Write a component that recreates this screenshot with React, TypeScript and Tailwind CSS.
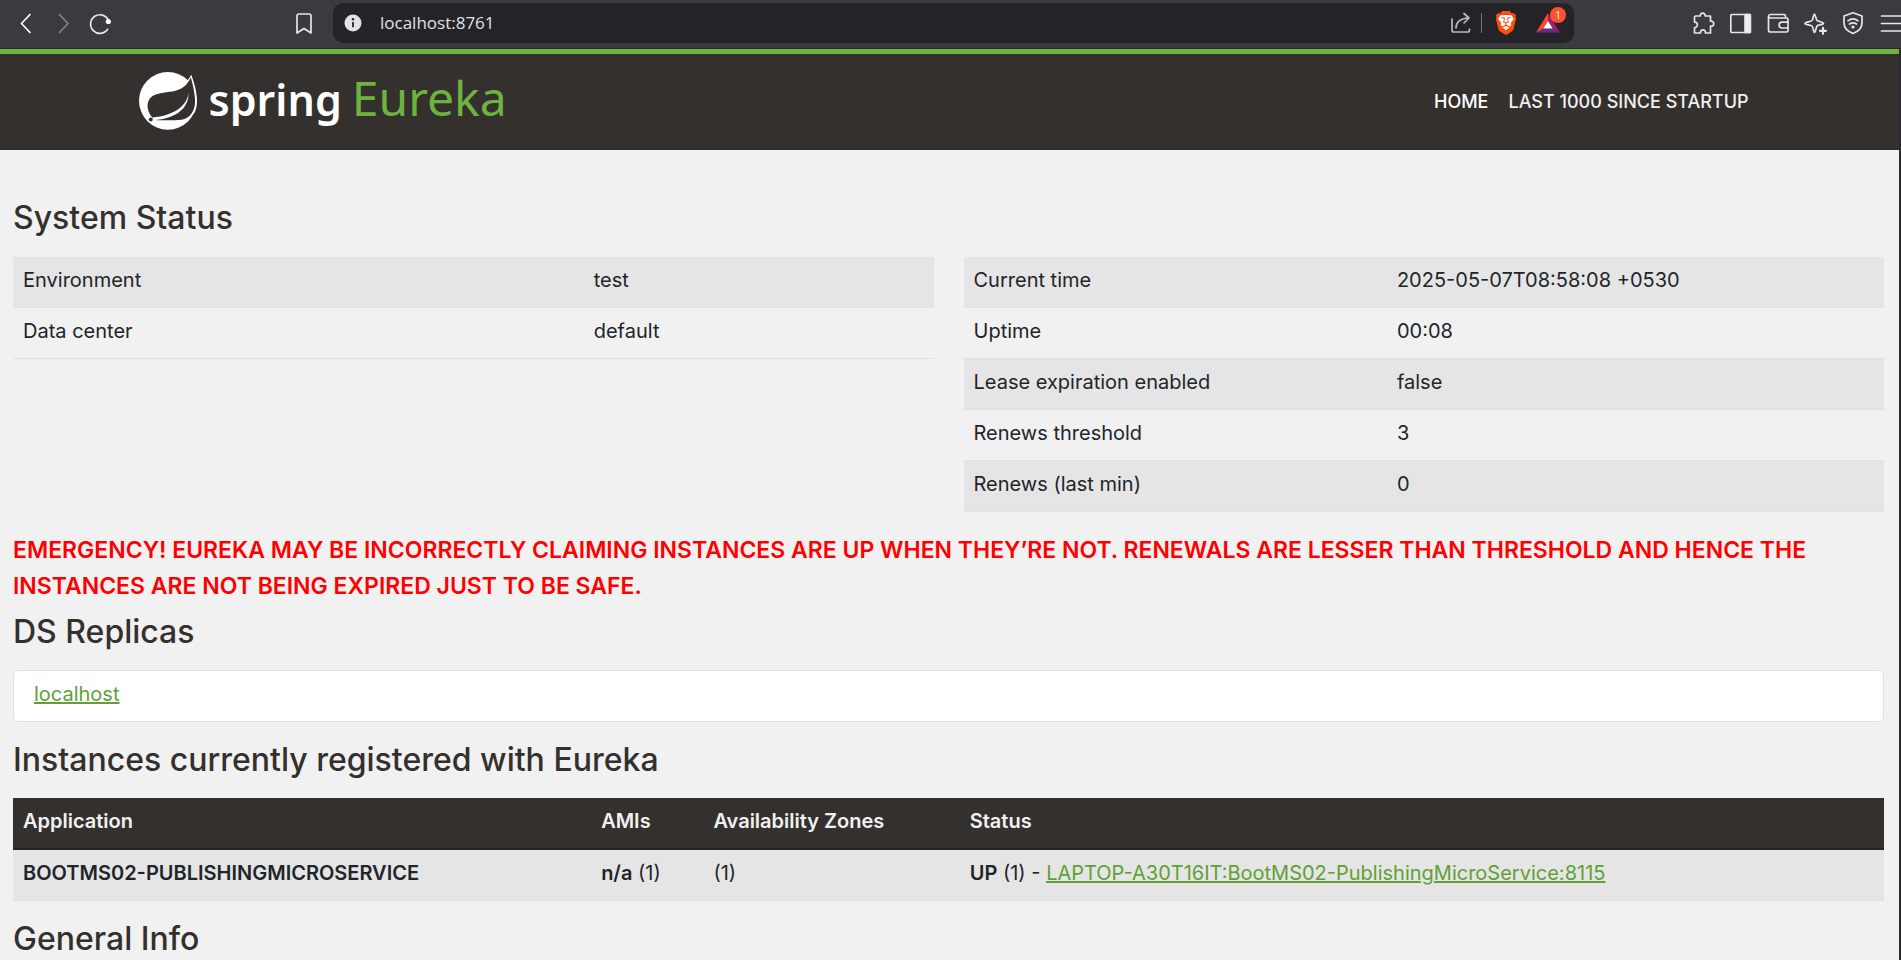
import React from 'react';
import { SiBrave } from 'react-icons/si';

const chromeLine = {
  fill: 'none',
  stroke: '#e6e6ea',
  strokeWidth: 1.7,
  strokeLinecap: 'round',
  strokeLinejoin: 'round',
} as const;

function ChromeButton({ label, children }: { label: string; children: React.ReactNode }) {
  return (
    <button type="button" aria-label={label} className="flex size-6 shrink-0 items-center justify-center">
      {children}
    </button>
  );
}

function Glyph({ children }: { children: React.ReactNode }) {
  return (
    <svg viewBox="0 0 24 24" className="size-6 overflow-visible" aria-hidden="true" {...chromeLine}>
      {children}
    </svg>
  );
}

function BrowserBar() {
  return (
    <div className="flex h-12 shrink-0 items-center overflow-hidden bg-[#3b3a3e] pb-[2px] pl-[13px]">
      <div className="flex items-center gap-[13px]">
        <ChromeButton label="Back">
          <Glyph><path d="M17 3.5 8.5 12.5 17 21.5" stroke="#fff" /></Glyph>
        </ChromeButton>
        <ChromeButton label="Forward">
          <Glyph><path d="M9.500 3.5 18 12.500 9.500 21.500" stroke="#838287" /></Glyph>
        </ChromeButton>
        <ChromeButton label="Reload">
          <Glyph>
            <path d="M21.500 9.500A9.300 9.300 0 1 0 20.600 18.300" />
            <circle cx="21.300" cy="10.500" r="2.600" fill="#fff" stroke="none" />
          </Glyph>
        </ChromeButton>
      </div>
      <div className="ml-[181px] mr-[17px] flex">
        <ChromeButton label="Bookmark this page">
          <Glyph><path d="M7 3h10a2 2 0 0 1 2 2v17l-7-4.500-7 4.500V5a2 2 0 0 1 2-2z" /></Glyph>
        </ChromeButton>
      </div>
      <div className="flex h-10 min-w-0 flex-1 items-center rounded-[10px] bg-[#242328] pr-3 pl-[11px]">
        <svg viewBox="0 0 18 18" className="size-[18px] shrink-0" role="img" aria-label="Site information">
          <circle cx="9" cy="9" r="8.500" fill="#e3e2e7" />
          <circle cx="9" cy="5.300" r="1.200" fill="#242328" />
          <path d="M9 8v5.300" stroke="#242328" strokeWidth="1.800" />
        </svg>
        <input
          type="text"
          aria-label="Address"
          defaultValue="localhost:8761"
          className="ml-[18px] h-8 min-w-0 flex-1 bg-transparent pb-[2px] font-['Open_Sans',sans-serif] text-[17px] text-[#e2e2e6] outline-none"
        />
        <ChromeButton label="Share">
          <Glyph>
            <g stroke="#b9b9be">
              <path d="M3 8v11a2 2 0 0 0 2 2h13.500a2 2 0 0 0 2-2v-1" />
              <path d="M7 17c0-6 4.500-9.500 12.500-10M15 2.500 20 7l-5 5" />
            </g>
          </Glyph>
        </ChromeButton>
        <span className="mx-2 h-5 w-px bg-[#77767b]" />
        <button type="button" aria-label="Shields" className="flex h-6 w-8 shrink-0 items-center justify-center">
          <svg viewBox="0 0 24 24" className="size-6 overflow-visible" aria-hidden="true">
            <path d="M5 4h14l1 5-3 9-5 4-5-4-3-9z" fill="#fff" />
            <SiBrave size={24} color="#fb4f0a" />
          </svg>
        </button>
        <button type="button" aria-label="Rewards, 1 new" className="relative ml-3 flex size-7 shrink-0 items-center justify-center">
          <svg viewBox="1 1 22 20" className="h-5 w-6" preserveAspectRatio="none" aria-hidden="true">
            <path d="M12 1 1 20.500 8 16.500 12 9z" fill="#ff4724" />
            <path d="M12 1 23 20.500 16 16.500 12 9z" fill="#9e1f63" />
            <path d="M1 20.500h22L16 16.500H8z" fill="#662d91" />
            <path d="M12 9 16.300 16.500H7.700z" fill="#fff" />
          </svg>
          <span className="absolute -top-[2px] -right-[4px] flex size-4 items-center justify-center rounded-full bg-[#ff5030] font-['Open_Sans',sans-serif] text-[10px] text-white">
            1
          </span>
        </button>
      </div>
      <div className="ml-[118px] flex items-center gap-[13px]">
        <ChromeButton label="Extensions">
          <Glyph>
            <path d="M3.500 5H8.300c-.6-3.800 5.400-3.800 4.800 0h5.400v5.200c4.300-.6 4.300 5.600 0 5V22H13.500c.4-4.200-5.400-4.200-5 0H2.500v-5.500c3.800.3 3.800-5.600 0-5.300V6z" />
          </Glyph>
        </ChromeButton>
        <ChromeButton label="Sidebar">
          <Glyph>
            <rect x="1.800" y="3.500" width="19.500" height="18" rx="1" />
            <path d="M16 3.500h5.300v18H16z" fill="#f0f0f3" />
          </Glyph>
        </ChromeButton>
        <ChromeButton label="Wallet">
          <Glyph>
            <path d="M19.500 7V5a1.500 1.500 0 0 0-1.500-1.500H4A1.800 1.800 0 0 0 4 7h16.500A1.500 1.500 0 0 1 22 8.500v11a1.500 1.500 0 0 1-1.500 1.500H4.500a2 2 0 0 1-2-2V5.500" />
            <path d="M22 11.200h-6a2.900 2.900 0 0 0 0 5.800h6" />
          </Glyph>
        </ChromeButton>
        <ChromeButton label="Leo AI">
          <Glyph>
            <path d="M11.500 3c1 0 1.300 5.200 2.500 6.400s6.500 1.800 6.500 3-5.500 1.300-6.500 2.700-1.500 6.400-2.500 6.400-1.200-5.200-2.500-6.500-7-1.200-7-2.600 5.700-1.600 7-2.900S10.500 3 11.500 3z" />
            <path d="M20 16.800v6M17 19.800h6" strokeWidth="2.200" />
          </Glyph>
        </ChromeButton>
        <ChromeButton label="VPN">
          <Glyph>
            <path d="M13 1.800 22 5v7c0 5-4 8.500-9 10.500C8 20.500 4 17 4 12V5z" />
            <path d="M8 9.800c3-2.300 7-2.300 10 0M9.500 13c2.200-1.500 4.800-1.500 7 0" strokeWidth="1.700" />
            <circle cx="13" cy="16" r="1.600" fill="#e6e6ea" stroke="none" />
          </Glyph>
        </ChromeButton>
        <ChromeButton label="Menu">
          <Glyph><path d="M4.500 5h24M4.500 12.500h24M4.500 20h24" /></Glyph>
        </ChromeButton>
      </div>
    </div>
  );
}

function SiteHeader() {
  return (
    <header className="border-t-[5px] border-[#6db33f] bg-[#34302d]">
      <div className="mx-auto flex h-24 max-w-[1650px] items-center justify-between px-[14px] pb-[2px]">
        <a href="#home" className="flex items-center" aria-label="Spring Eureka">
          <svg viewBox="14 14 173 173" className="size-[58px] overflow-visible" aria-hidden="true">
            <circle cx="100" cy="100" r="86" fill="#fff" />
            <path d="M170 22C188 70 193 112 178 138L150 158 120 100z" fill="#fff" />
            <path
              d="M168 30C160 52 143 68 113 72 95 75 78 75 62 82 44 90 38 104 40 121c2 14 7 22 16 32l4 4c45 2 72 2 90-3 24-10 33-32 31-60-2-24-7-46-13-64z"
              fill="#34302d"
            />
            <path d="M162 76C157 116 118 144 54 150v8c60-3 108-28 108-82z" fill="#fff" />
            <circle cx="49" cy="156" r="6" fill="#34302d" />
          </svg>
          <span className="ml-3 flex items-baseline gap-[10px] pb-1 font-['Noto_Sans',sans-serif] leading-[56px]">
            <span className="text-[43px] font-semibold text-white">spring</span>
            <span className="text-[48px] text-[#6db33f]">Eureka</span>
          </span>
        </a>
        <nav className="flex gap-5 pt-[2px] pr-3 text-lg font-medium text-[#f1f1f1]">
          <a href="#home" className="text-white">HOME</a>
          <a href="#lastn">LAST 1000 SINCE STARTUP</a>
        </nav>
      </div>
    </header>
  );
}

function SectionTitle({ children }: { children: React.ReactNode }) {
  return <h1 className="text-[32px] leading-9 font-medium text-[#34302d]">{children}</h1>;
}

function StatusTable({ rows, labelWidth }: { rows: [string, string][]; labelWidth: string }) {
  return (
    <table className="w-full table-fixed border-collapse self-start">
      <colgroup>
        <col className={labelWidth} />
        <col />
      </colgroup>
      <tbody>
        {rows.map(([label, value]) => (
          <tr key={label} className="border-b border-[#dee2e6] odd:bg-[#e5e5e5]">
            <th scope="row" className="px-[10px] pt-2 pb-3 text-left font-normal">{label}</th>
            <td className="px-[10px] pt-2 pb-3">{value}</td>
          </tr>
        ))}
      </tbody>
    </table>
  );
}

const environment: [string, string][] = [
  ['Environment', 'test'],
  ['Data center', 'default'],
];

const runtime: [string, string][] = [
  ['Current time', '2025-05-07T08:58:08 +0530'],
  ['Uptime', '00:08'],
  ['Lease expiration enabled', 'false'],
  ['Renews threshold', '3'],
  ['Renews (last min)', '0'],
];

export default function App() {
  return (
    <div className="flex h-screen flex-col overflow-hidden">
      <BrowserBar />
      <div className="min-h-0 flex-1 overflow-hidden border-t border-r-2 border-[#2b2a2e] bg-[#f1f1f1] font-['Inter','Open_Sans',sans-serif] text-[20px] leading-[30px] text-[#212529]">
        <SiteHeader />
        <main className="pt-[50px] pr-[15px] pl-[13px]">
          <SectionTitle>System Status</SectionTitle>
          <div className="mt-[21px] grid grid-cols-2 gap-[30px]">
            <StatusTable rows={environment} labelWidth="w-[62%]" />
            <StatusTable rows={runtime} labelWidth="w-[46%]" />
          </div>
          <p className="mt-5 text-[23px] leading-9 font-semibold text-[#ff0000]">
            EMERGENCY! EUREKA MAY BE INCORRECTLY CLAIMING INSTANCES ARE UP WHEN THEY’RE NOT. RENEWALS ARE LESSER THAN
            THRESHOLD AND HENCE THE INSTANCES ARE NOT BEING EXPIRED JUST TO BE SAFE.
          </p>
          <div className="mt-[10px]">
            <SectionTitle>DS Replicas</SectionTitle>
          </div>
          <ul className="mt-5 rounded-[5px] border border-[#dfdfdf] bg-white">
            <li className="px-5 pt-2 pb-3">
              <a href="#localhost" className="text-[#5fa134] underline">localhost</a>
            </li>
          </ul>
          <div className="mt-5">
            <SectionTitle>Instances currently registered with Eureka</SectionTitle>
          </div>
          <table className="mt-5 w-full table-fixed border-collapse text-left">
            <colgroup>
              <col className="w-[30.9%]" />
              <col className="w-[6%]" />
              <col className="w-[13.7%]" />
              <col />
            </colgroup>
            <thead>
              <tr className="border-b-2 border-[#212529] bg-[#34302d] text-[#f1f1f1]">
                <th className="px-[10px] pt-2 pb-3 font-semibold">Application</th>
                <th className="px-[10px] pt-2 pb-3 font-semibold">AMIs</th>
                <th className="px-[10px] pt-2 pb-3 font-semibold">Availability Zones</th>
                <th className="px-[10px] pt-2 pb-3 font-semibold">Status</th>
              </tr>
            </thead>
            <tbody>
              <tr className="border-b border-[#dee2e6] bg-[#e5e5e5]">
                <td className="px-[10px] pt-2 pb-3"><b className="font-semibold">BOOTMS02-PUBLISHINGMICROSERVICE</b></td>
                <td className="px-[10px] pt-2 pb-3 whitespace-nowrap"><b className="font-semibold">n/a</b> (1)</td>
                <td className="px-[10px] pt-2 pb-3">(1)</td>
                <td className="px-[10px] pt-2 pb-3">
                  <b className="font-semibold">UP</b> (1) -{' '}
                  <a href="#instance" className="text-[#5fa134] underline">
                    LAPTOP-A30T16IT:BootMS02-PublishingMicroService:8115
                  </a>
                </td>
              </tr>
            </tbody>
          </table>
          <div className="mt-5">
            <SectionTitle>General Info</SectionTitle>
          </div>
        </main>
      </div>
    </div>
  );
}
